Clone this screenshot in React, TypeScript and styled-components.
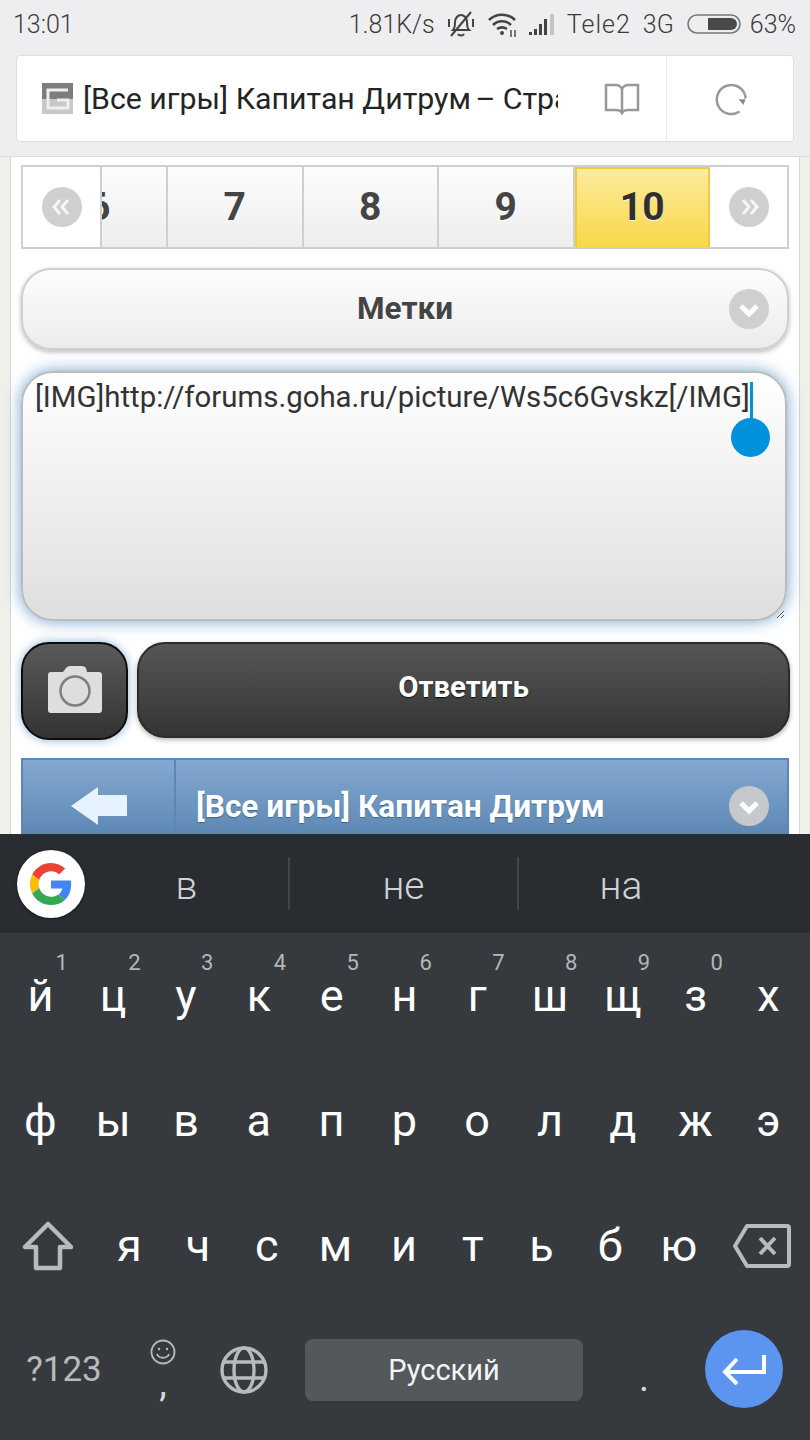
import React from "react";
import styled, { createGlobalStyle } from "styled-components";

const GlobalStyle = createGlobalStyle`
  html, body {
    margin: 0;
    padding: 0;
    background: #363a3f;
  }
  * {
    box-sizing: border-box;
  }
`;

const Screen = styled.div`
  width: 810px;
  height: 1440px;
  display: flex;
  flex-direction: column;
  overflow: hidden;
  font-family: Roboto, "Liberation Sans", sans-serif;
`;

const Chrome = styled.div`
  height: 157px;
  background: #eeeef0;
  border-bottom: 1px solid #dcdcdc;
`;

const StatusBar = styled.div`
  height: 48px;
  padding: 0 14px 0 13px;
  display: flex;
  align-items: center;
  justify-content: space-between;
  font-size: 25px;
  font-weight: 300;
  color: #3c3c3c;
`;

const StatusRight = styled.div`
  display: flex;
  align-items: center;
  gap: 12px;
`;

const Carrier = styled.span`
  letter-spacing: 1px;
`;

const BatteryIcon = styled.svg`
  margin: 0 -3px 0 1px;
`;

const AddressBar = styled.div`
  height: 87px;
  margin: 7px 16px 0;
  display: flex;
  align-items: center;
  background: #fff;
  border: 1px solid #dedee0;
  border-radius: 4px;
`;

const Favicon = styled.svg`
  margin-left: 25px;
  flex: none;
`;

const PageTitle = styled.div`
  width: 475px;
  margin-left: 10px;
  overflow: hidden;
  white-space: nowrap;
  font-size: 30.3px;
  color: #242424;
`;

const TitleTail = styled.span`
  margin-left: -3px;
`;

const BookCell = styled.div`
  flex: 1;
  height: 100%;
  padding-left: 20px;
  display: flex;
  align-items: center;
  justify-content: center;
`;

const ReloadCell = styled.div`
  width: 127px;
  height: 100%;
  padding-left: 4px;
  display: flex;
  align-items: center;
  justify-content: center;
  border-left: 1px solid #ececec;
`;

const PageGutter = styled.div`
  height: 677px;
  padding: 0 10px;
  background: #f0f0ea;
  overflow: hidden;
`;

const Page = styled.div`
  height: 100%;
  padding: 8px 10px 0;
  display: flex;
  flex-direction: column;
  background: #fff;
  border-left: 1px solid #d8d8d4;
  border-right: 1px solid #d8d8d4;
`;

const Pager = styled.div`
  height: 84px;
  flex: none;
  display: flex;
  background: #fff;
  border: 2px solid #cfcfcf;
`;

const PagerEnd = styled.div`
  width: 77px;
  flex: none;
  display: flex;
  align-items: center;
  justify-content: center;
`;

const PagerTiles = styled.div`
  flex: 1;
  min-width: 0;
  display: flex;
  justify-content: flex-end;
  overflow: hidden;
  border-left: 2px solid #cfcfcf;
`;

const Tile = styled.div<{ $active?: boolean }>`
  width: 135.5px;
  flex: none;
  display: flex;
  align-items: center;
  justify-content: center;
  font-size: 39px;
  font-weight: 700;
  color: ${(p) => (p.$active ? "#2f2f2f" : "#444")};
  text-shadow: 0 1px 0 #fff;
  background: ${(p) =>
    p.$active
      ? "linear-gradient(#fcec9f, #f9d749)"
      : "linear-gradient(#fdfdfd, #ededed)"};
  border-right: 2px solid ${(p) => (p.$active ? "#f5c842" : "#cfcfcf")};
  border-left: ${(p) => (p.$active ? "2px solid #f5c842" : "none")};
  box-shadow: ${(p) => (p.$active ? "inset 0 2px 0 #f5c842" : "none")};
`;

const SelectButton = styled.div`
  position: relative;
  height: 82px;
  flex: none;
  margin-top: 19px;
  padding-bottom: 2px;
  display: flex;
  align-items: center;
  justify-content: center;
  font-size: 31.5px;
  font-weight: 700;
  color: #444;
  text-shadow: 0 1px 0 #fff;
  background: linear-gradient(#fdfdfd, #ececec);
  border: 2px solid #cfcfcf;
  border-radius: 30px;
  box-shadow: 0 2px 5px rgba(0, 0, 0, 0.28);
`;

const CircleIcon = styled.div`
  position: absolute;
  right: 18px;
  top: 50%;
  height: 40px;
  transform: translateY(-50%);
`;

const EditorWrap = styled.div`
  position: relative;
  flex: none;
  width: 766px;
  height: 250px;
  margin-top: 21px;
`;

const Editor = styled.textarea`
  display: block;
  width: 100%;
  height: 100%;
  padding: 6px 12px;
  font-family: Roboto, "Liberation Sans", sans-serif;
  font-size: 29.4px;
  line-height: 36px;
  color: #333;
  outline: none;
  background: linear-gradient(#fff, #dfdfdf);
  border: 2px solid #bbb;
  border-radius: 32px;
  box-shadow: 0 0 16px rgba(56, 123, 190, 0.7);
`;

const CaretLine = styled.div`
  position: absolute;
  left: 729px;
  top: 11px;
  width: 3px;
  height: 38px;
  background: #0091dd;
`;

const CaretHandle = styled.div`
  position: absolute;
  left: 710px;
  top: 47px;
  width: 39px;
  height: 39px;
  border-radius: 50%;
  background: #0091dd;
`;

const ActionRow = styled.div`
  flex: none;
  display: flex;
  align-items: flex-start;
  gap: 9px;
  margin-top: 21px;
  height: 98px;
`;

const CameraButton = styled.div`
  width: 107px;
  height: 98px;
  flex: none;
  padding-bottom: 3px;
  display: flex;
  align-items: center;
  justify-content: center;
  background: linear-gradient(#5a5a5a, #333);
  border: 2px solid #0c0c0c;
  border-radius: 28px;
  box-shadow: 0 0 10px rgba(56, 123, 190, 0.6);
`;

const ReplyButton = styled.div`
  flex: 1;
  height: 96px;
  margin-right: -1px;
  display: flex;
  align-items: center;
  justify-content: center;
  padding-bottom: 6px;
  font-size: 29.4px;
  font-weight: 700;
  color: #fff;
  text-shadow: 0 1px 1px #111;
  background: linear-gradient(#565656, #343434);
  border: 2px solid #2c2c2c;
  border-radius: 28px;
  box-shadow: 0 2px 5px rgba(0, 0, 0, 0.3);
`;

const ThreadBar = styled.div`
  position: relative;
  height: 96px;
  flex: none;
  margin-top: 18px;
  display: flex;
  background: linear-gradient(#84a9d1, #5480ad);
  border: 2px solid #5a87b5;
`;

const BackCell = styled.div`
  width: 153px;
  height: 100%;
  flex: none;
  display: flex;
  align-items: center;
  justify-content: center;
  border-right: 2px solid #5a87b5;
`;

const ThreadTitle = styled.div`
  padding-left: 20px;
  display: flex;
  align-items: center;
  font-size: 31.6px;
  font-weight: 700;
  color: #fff;
  text-shadow: 0 1px 1px #3d648c;
`;

const Keyboard = styled.div`
  flex: 1;
  display: flex;
  flex-direction: column;
  background: #363a3f;
`;

const Suggestions = styled.div`
  height: 99px;
  flex: none;
  padding-left: 17px;
  display: flex;
  align-items: center;
  background: #292d32;
`;

const GoogleBadge = styled.div`
  width: 68px;
  height: 68px;
  flex: none;
  display: flex;
  align-items: center;
  justify-content: center;
  background: #fff;
  border-radius: 50%;
  box-shadow: 0 1px 3px rgba(0, 0, 0, 0.5);
`;

const Suggestion = styled.div<{ $w: number; $divider?: boolean }>`
  width: ${(p) => p.$w}px;
  height: 53px;
  flex: none;
  padding-top: 4px;
  display: flex;
  align-items: center;
  justify-content: center;
  font-size: 39px;
  font-weight: 300;
  color: #d0d2d4;
  border-right: ${(p) => (p.$divider ? "2px solid #41464b" : "none")};
`;

const KeyRow = styled.div<{ $pad?: number; $h?: number }>`
  height: ${(p) => p.$h ?? 125}px;
  flex: none;
  padding: 0 ${(p) => p.$pad ?? 4}px;
  display: flex;
  align-items: center;
`;

const LetterKey = styled.div<{ $w?: number }>`
  position: relative;
  width: ${(p) => p.$w ?? 72.8}px;
  height: 100%;
  flex: none;
  display: flex;
  align-items: center;
  justify-content: center;
  font-size: 45px;
  color: #fff;
`;

const Hint = styled.span`
  position: absolute;
  top: 17px;
  right: 9px;
  font-size: 22px;
  color: #b4b6b8;
`;

const SymbolKey = styled(LetterKey)`
  font-size: 35px;
  color: #b9babb;
`;

const CommaKey = styled(LetterKey)`
  flex-direction: column;
  padding-bottom: 2px;
  gap: 3px;
  font-size: 38px;
  color: #d8d8d8;
  line-height: 30px;
`;

const PeriodKey = styled(SymbolKey)`
  padding-top: 16px;
  font-size: 38px;
  color: #d8d8d8;
`;

const SpaceKey = styled.div`
  width: 278px;
  height: 62px;
  flex: none;
  margin-left: 15px;
  display: flex;
  align-items: center;
  justify-content: center;
  font-size: 29px;
  color: #f4f4f4;
  background: #53585c;
  border-radius: 8px;
`;

const EnterKey = styled.div`
  width: 78px;
  height: 78px;
  flex: none;
  margin-top: -2px;
  display: flex;
  align-items: center;
  justify-content: center;
  background: #5c95f0;
  border-radius: 50%;
`;

const Chevron = ({ dir, fill }: { dir: "down" | "left" | "right"; fill: string }) => (
  <svg width="40" height="40" viewBox="0 0 40 40">
    <circle cx="20" cy="20" r="20" fill={fill} />
    {dir === "down" && <path d="M12 17l8 8 8-8" fill="none" stroke="#fff" strokeWidth="5" />}
    {dir === "left" && (
      <path d="M18 13l-6 7 6 7M26 13l-6 7 6 7" fill="none" stroke="#f6f6f6" strokeWidth="3" />
    )}
    {dir === "right" && (
      <path d="M14 13l6 7-6 7M22 13l6 7-6 7" fill="none" stroke="#f6f6f6" strokeWidth="3" />
    )}
  </svg>
);

const row1 = [
  ["й", "1"],
  ["ц", "2"],
  ["у", "3"],
  ["к", "4"],
  ["е", "5"],
  ["н", "6"],
  ["г", "7"],
  ["ш", "8"],
  ["щ", "9"],
  ["з", "0"],
  ["х", ""],
];
const row2 = ["ф", "ы", "в", "а", "п", "р", "о", "л", "д", "ж", "э"];
const row3 = ["я", "ч", "с", "м", "и", "т", "ь", "б", "ю"];

export default function App() {
  return (
    <Screen>
      <GlobalStyle />
      <Chrome>
        <StatusBar>
          <span>13:01</span>
          <StatusRight>
            <span>1.81K/s</span>
            <svg width="28" height="30" viewBox="0 0 28 30" fill="none" stroke="#444" strokeWidth="2">
              <path d="M6 21c2-2 2-4 2-8 0-4 3-7 6-7s6 3 6 7c0 4 0 6 2 8z" />
              <path d="M11 25c1 2 5 2 6 0" />
              <path d="M4 27L24 3" />
              <path d="M2 10v8M26 10v8" />
            </svg>
            <svg width="30" height="26" viewBox="0 0 30 26" fill="none" stroke="#444" strokeWidth="2.6">
              <path d="M2 9c7-7 19-7 26 0" />
              <path d="M6 14c5-5 13-5 18 0" />
              <path d="M10 18c3-2 7-2 10 0" />
              <circle cx="15" cy="22" r="2" fill="#444" stroke="none" />
              <path d="M24 19v7M28 19v7" strokeWidth="1.4" />
            </svg>
            <svg width="26" height="24" viewBox="0 0 26 24">
              <path d="M0 20h3v3H0z" fill="#444" />
              <path d="M5 17h3v6H5z" fill="#444" />
              <path d="M10 12h3v11h-3z" fill="#444" />
              <path d="M15 7h3v16h-3z" fill="#444" />
              <path d="M21 2h4v21h-4z" fill="#c4c4c4" />
            </svg>
            <Carrier>Tele2</Carrier>
            <span>3G</span>
            <BatteryIcon width="54" height="20" viewBox="0 0 54 20">
              <rect x="1" y="1" width="52" height="18" rx="9" fill="none" stroke="#777" strokeWidth="1.6" />
              <path d="M21 4h23a6 6 0 0 1 0 12H21z" fill="#4a4a4a" />
            </BatteryIcon>
            <span>63%</span>
          </StatusRight>
        </StatusBar>
        <AddressBar>
          <Favicon width="31" height="31" viewBox="0 0 31 31">
            <rect width="31" height="31" fill="#7d7d7d" />
            <rect y="16" width="31" height="15" fill="#c8c8c8" />
            <path d="M26 7H6v18h20v-8H15" fill="none" stroke="#efefef" strokeWidth="3" />
          </Favicon>
          <PageTitle>
            [Все игры] Капитан Дитрум <TitleTail>– Страница 10</TitleTail>
          </PageTitle>
          <BookCell>
            <svg width="36" height="32" viewBox="0 0 36 32" fill="none" stroke="#999" strokeWidth="2.500">
              <path d="M2 2h10c3 0 5 2 6 4 1-2 3-4 6-4h10v25H24c-3 0-5 1-6 3-1-2-3-3-6-3H2z" />
              <path d="M18 6v24" />
            </svg>
          </BookCell>
          <ReloadCell>
            <svg width="34" height="34" viewBox="0 0 34 34" fill="none" stroke="#999" strokeWidth="2.500">
              <path d="M24.500 29.500A14.500 14.500 0 1 1 29.500 11.500" />
              <path d="M29.500 11.500q1 2 1 5" />
              <path d="M23.500 17.300h7l-2 5.700z" fill="#888" stroke="none" />
            </svg>
          </ReloadCell>
        </AddressBar>
      </Chrome>
      <PageGutter>
        <Page>
          <Pager>
            <PagerEnd>
              <Chevron dir="left" fill="#cfcfcf" />
            </PagerEnd>
            <PagerTiles>
              <Tile>6</Tile>
              <Tile>7</Tile>
              <Tile>8</Tile>
              <Tile>9</Tile>
              <Tile $active>10</Tile>
            </PagerTiles>
            <PagerEnd>
              <Chevron dir="right" fill="#cfcfcf" />
            </PagerEnd>
          </Pager>
          <SelectButton>
            Метки
            <CircleIcon>
              <Chevron dir="down" fill="#cfcfcf" />
            </CircleIcon>
          </SelectButton>
          <EditorWrap>
            <Editor readOnly spellCheck={false} defaultValue="[IMG]http://forums.goha.ru/picture/Ws5c6Gvskz[/IMG]" />
            <CaretLine />
            <CaretHandle />
          </EditorWrap>
          <ActionRow>
            <CameraButton>
              <svg width="56" height="48" viewBox="0 0 56 48">
                <path
                  d="M4 6h12l3-4c1-1 2-2 4-2h12c2 0 3 1 4 2l1 4h12a3 3 0 0 1 3 3v35a3 3 0 0 1-3 3H4a3 3 0 0 1-3-3V9a3 3 0 0 1 3-3z"
                  fill="#dedede"
                />
                <circle cx="28" cy="25" r="14.500" fill="#dedede" stroke="#7f7f7f" strokeWidth="2.500" />
              </svg>
            </CameraButton>
            <ReplyButton>Ответить</ReplyButton>
          </ActionRow>
          <ThreadBar>
            <BackCell>
              <svg width="56" height="38" viewBox="0 0 56 38">
                <path d="M0 19L27 0v8h29v21H27v9z" fill="#e6f2fd" />
              </svg>
            </BackCell>
            <ThreadTitle>[Все игры] Капитан Дитрум</ThreadTitle>
            <CircleIcon>
              <Chevron dir="down" fill="#c6c9cc" />
            </CircleIcon>
          </ThreadBar>
        </Page>
      </PageGutter>
      <Keyboard>
        <Suggestions>
          <GoogleBadge>
            <svg width="42" height="42" viewBox="0 0 48 48">
              <path fill="#EA4335" d="M24 9.500c3.540 0 6.710 1.220 9.210 3.600l6.850-6.850C35.900 2.380 30.470 0 24 0 14.620 0 6.510 5.380 2.560 13.220l7.980 6.190C12.430 13.720 17.740 9.500 24 9.500z" />
              <path fill="#4285F4" d="M46.980 24.550c0-1.570-.15-3.090-.38-4.550H24v9.020h12.940c-.58 2.960-2.260 5.480-4.780 7.180l7.730 6c4.510-4.180 7.090-10.360 7.090-17.650z" />
              <path fill="#FBBC05" d="M10.530 28.590c-.48-1.450-.76-2.990-.76-4.590s.27-3.140.76-4.590l-7.980-6.190C.92 16.460 0 20.120 0 24c0 3.880.92 7.540 2.560 10.780l7.970-6.190z" />
              <path fill="#34A853" d="M24 48c6.480 0 11.930-2.130 15.890-5.810l-7.730-6c-2.150 1.450-4.920 2.300-8.160 2.300-6.260 0-11.570-4.220-13.470-9.910l-7.980 6.190C6.510 42.620 14.620 48 24 48z" />
            </svg>
          </GoogleBadge>
          <Suggestion $w={205} $divider>в</Suggestion>
          <Suggestion $w={229} $divider>не</Suggestion>
          <Suggestion $w={204}>на</Suggestion>
        </Suggestions>
        <KeyRow>
          {row1.map(([letter, hint]) => (
            <LetterKey key={letter}>
              {letter}
              {hint && <Hint>{hint}</Hint>}
            </LetterKey>
          ))}
        </KeyRow>
        <KeyRow>
          {row2.map((letter) => (
            <LetterKey key={letter}>{letter}</LetterKey>
          ))}
        </KeyRow>
        <KeyRow $pad={0}>
          <SymbolKey $w={95}>
            <svg width="52" height="50" viewBox="0 0 52 50" fill="none" stroke="#b9babb" strokeWidth="4.500" strokeLinejoin="round">
              <path d="M26 3L3 26h11v21h24V26h11z" />
            </svg>
          </SymbolKey>
          {row3.map((letter) => (
            <LetterKey key={letter} $w={68.7}>{letter}</LetterKey>
          ))}
          <SymbolKey $w={97}>
            <svg width="58" height="44" viewBox="0 0 58 44" fill="none" stroke="#b9babb" strokeWidth="4" strokeLinejoin="round">
              <path d="M14 2h40a2 2 0 0 1 2 2v36a2 2 0 0 1-2 2H14L2 22z" />
              <path d="M27 14l15 16M42 14L27 30" />
            </svg>
          </SymbolKey>
        </KeyRow>
        <KeyRow $pad={0} $h={123}>
          <SymbolKey $w={128}>?123</SymbolKey>
          <CommaKey $w={70}>
            <svg width="26" height="26" viewBox="0 0 26 26" fill="none" stroke="#b9babb" strokeWidth="1.800">
              <circle cx="13" cy="13" r="11.500" />
              <circle cx="9" cy="10" r="1.200" fill="#b9babb" stroke="none" />
              <circle cx="17" cy="10" r="1.200" fill="#b9babb" stroke="none" />
              <path d="M7 15c2 5 10 5 12 0" />
            </svg>
            <span>,</span>
          </CommaKey>
          <SymbolKey $w={92}>
            <svg width="48" height="48" viewBox="0 0 48 48" fill="none" stroke="#b9babb" strokeWidth="3.400">
              <circle cx="24" cy="24" r="22" />
              <ellipse cx="24" cy="24" rx="10" ry="22" />
              <path d="M3 16h42M3 32h42" />
            </svg>
          </SymbolKey>
          <SpaceKey>Русский</SpaceKey>
          <PeriodKey $w={122}>.</PeriodKey>
          <EnterKey>
            <svg width="44" height="32" viewBox="0 0 44 32" fill="none" stroke="#fff" strokeWidth="4">
              <path d="M42 2v17H5" />
              <path d="M15 6L3 19l12 12" />
            </svg>
          </EnterKey>
        </KeyRow>
      </Keyboard>
    </Screen>
  );
}
